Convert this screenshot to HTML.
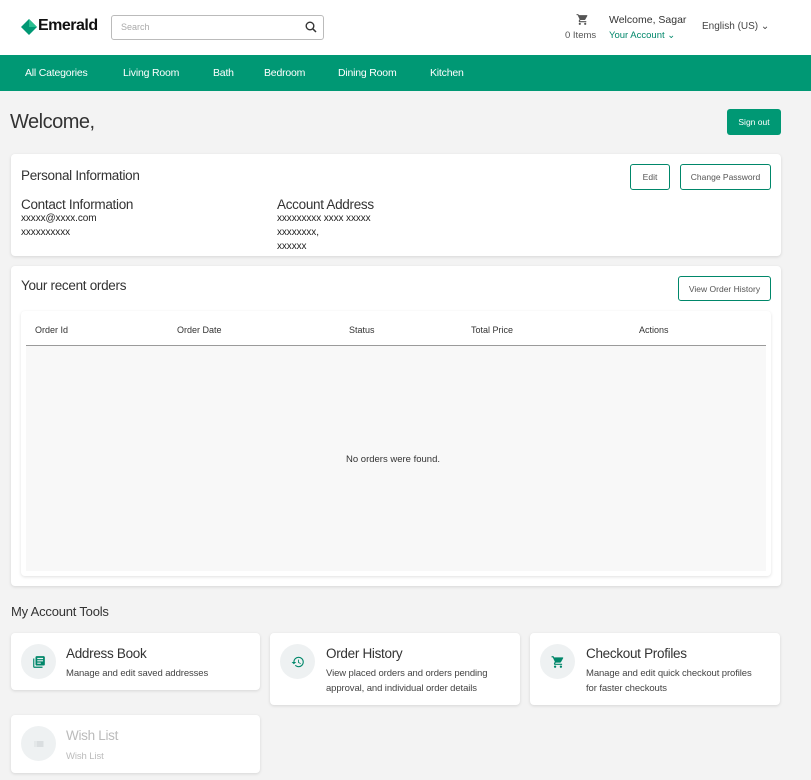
<!DOCTYPE html>
<html><head><meta charset="utf-8"><style>
*{box-sizing:border-box;margin:0;padding:0}
body{width:811px;height:780px;background:#f3f3f3;font-family:"Liberation Sans",sans-serif;color:#333;position:relative;overflow:hidden}
.a{position:absolute;white-space:nowrap}
.card{position:absolute;background:#fff;border-radius:4px;box-shadow:0 1px 3px rgba(0,0,0,.12)}
.btn{position:absolute;border:1px solid #00876a;border-radius:3px;color:#555;font-size:8.5px;display:flex;align-items:center;justify-content:center;background:#fff}
.nav span{position:absolute;top:67px;color:#fff;font-size:10.5px;letter-spacing:-.2px}
.th{position:absolute;top:325px;font-size:9px;color:#333}
.ic{position:absolute;width:35px;height:35px;border-radius:50%;background:#eef1f2;display:flex;align-items:center;justify-content:center}
.t{position:absolute;font-size:13.5px;color:#333;letter-spacing:-.3px}
.d{position:absolute;font-size:9.5px;color:#444;line-height:15px;letter-spacing:-.1px}
</style></head><body>
<div class="a" style="left:0;top:0;width:811px;height:55px;background:#fff"></div>
<svg class="a" style="left:21px;top:19px" width="16" height="16" viewBox="0 0 16 16"><polygon points="8,0 16,8 8,16 0,8" fill="#009874"/><polygon points="8,0 16,8 8,8" fill="#2bbf91"/></svg>
<div class="a" style="left:38px;top:17px;font-size:16px;font-weight:bold;color:#111;letter-spacing:-.5px">Emerald</div>
<div class="a" style="left:111px;top:15px;width:213px;height:25px;border:1px solid #bbb;border-radius:3px;background:#fff"></div>
<div class="a" style="left:121px;top:22px;font-size:9px;color:#aaa">Search</div>
<svg class="a" style="left:305px;top:21px" width="12" height="12" viewBox="0 0 12 12"><circle cx="5" cy="5" r="3.8" fill="none" stroke="#333" stroke-width="1.4"/><line x1="7.8" y1="7.8" x2="11" y2="11" stroke="#333" stroke-width="1.5"/></svg>
<svg class="a" style="left:576px;top:13px" width="13" height="13" viewBox="0 0 24 24"><path fill="#555" d="M7 18c-1.1 0-2 .9-2 2s.9 2 2 2 2-.9 2-2-.9-2-2-2zM1 2v2h2l3.6 7.6-1.4 2.4c-.1.3-.2.6-.2 1 0 1.1.9 2 2 2h12v-2H7.4c-.1 0-.2-.1-.2-.2v-.1l.9-1.7h7.4c.8 0 1.4-.4 1.7-1l3.6-6.5c.1-.2.2-.3.2-.5 0-.6-.4-1-1-1H5.2l-.9-2H1zm16 16c-1.1 0-2 .9-2 2s.9 2 2 2 2-.9 2-2-.9-2-2-2z"/></svg>
<div class="a" style="left:565px;top:30px;font-size:9.5px;color:#555">0 Items</div>
<div class="a" style="left:609px;top:14px;font-size:10.5px;color:#333">Welcome, Sagar</div>
<div class="a" style="left:609px;top:30px;font-size:9.5px;color:#00876a">Your Account ⌄</div>
<div class="a" style="left:702px;top:21px;font-size:10px;color:#444">English (US) ⌄</div>
<div class="a nav" style="left:0;top:55px;width:811px;height:36px;background:#009874"></div>
<div class="nav"><span style="left:25px">All Categories</span><span style="left:123px">Living Room</span><span style="left:213px">Bath</span><span style="left:264px">Bedroom</span><span style="left:338px">Dining Room</span><span style="left:430px">Kitchen</span></div>
<div class="a" style="left:10px;top:111px;font-size:20px;color:#333;letter-spacing:-.5px">Welcome,</div>
<div class="a" style="left:727px;top:109px;width:54px;height:26px;background:#009874;border-radius:3px;color:#fff;font-size:8.5px;display:flex;align-items:center;justify-content:center">Sign out</div>
<div class="card" style="left:11px;top:154px;width:770px;height:102px"></div>
<div class="t" style="left:21px;top:168px">Personal Information</div>
<div class="btn" style="left:630px;top:164px;width:40px;height:26px">Edit</div>
<div class="btn" style="left:680px;top:164px;width:91px;height:26px">Change Password</div>
<div class="t" style="left:21px;top:197px">Contact Information</div>
<div class="d" style="left:21px;top:212px;font-size:10px;line-height:14px;color:#222">xxxxx@xxxx.com<br>xxxxxxxxxx</div>
<div class="t" style="left:277px;top:197px">Account Address</div>
<div class="d" style="left:277px;top:212px;font-size:10px;line-height:14px;color:#222">xxxxxxxxx xxxx xxxxx<br>xxxxxxxx,<br>xxxxxx</div>
<div class="card" style="left:11px;top:266px;width:770px;height:320px"></div>
<div class="t" style="left:21px;top:278px">Your recent orders</div>
<div class="btn" style="left:678px;top:276px;width:93px;height:25px">View Order History</div>
<div class="card" style="left:21px;top:311px;width:750px;height:265px"></div>
<div class="th" style="left:35px">Order Id</div><div class="th" style="left:177px">Order Date</div><div class="th" style="left:349px">Status</div><div class="th" style="left:471px">Total Price</div><div class="th" style="left:639px">Actions</div>
<div class="a" style="left:26px;top:345px;width:740px;height:1px;background:#9a9a9a"></div>
<div class="a" style="left:26px;top:346px;width:740px;height:225px;background:#f8f8f8"></div>
<div class="a" style="left:346px;top:454px;font-size:9.5px;color:#333">No orders were found.</div>
<div class="a" style="left:11px;top:604px;font-size:13px;color:#333;letter-spacing:-.2px">My Account Tools</div>
<div class="card" style="left:11px;top:633px;width:249px;height:57px"></div>
<div class="card" style="left:270px;top:633px;width:250px;height:72px"></div>
<div class="card" style="left:530px;top:633px;width:250px;height:72px"></div>
<div class="card" style="left:11px;top:715px;width:249px;height:58px"></div>
<div class="ic" style="left:21px;top:644px"><svg width="14" height="14" viewBox="0 0 24 24"><path fill="#00876a" d="M4 6H2v14c0 1.1.9 2 2 2h14v-2H4V6zm16-4H8c-1.1 0-2 .9-2 2v12c0 1.1.9 2 2 2h12c1.1 0 2-.9 2-2V4c0-1.1-.9-2-2-2zm-1 9H9V9h10v2zm-4 4H9v-2h6v2zm4-8H9V5h10v2z"/></svg></div>
<div class="ic" style="left:280px;top:644px"><svg width="14" height="14" viewBox="0 0 24 24"><path fill="#00876a" d="M13 3a9 9 0 0 0-9 9H1l3.9 3.9L9 12H6c0-3.9 3.1-7 7-7s7 3.1 7 7-3.1 7-7 7c-1.9 0-3.7-.8-4.9-2.1l-1.4 1.4C8.3 20 10.5 21 13 21a9 9 0 0 0 0-18zm-1 5v5l4.3 2.5.7-1.2-3.5-2.1V8H12z"/></svg></div>
<div class="ic" style="left:540px;top:644px"><svg width="14" height="14" viewBox="0 0 24 24"><path fill="#00876a" d="M7 18c-1.1 0-2 .9-2 2s.9 2 2 2 2-.9 2-2-.9-2-2-2zM1 2v2h2l3.6 7.6-1.4 2.4c-.1.3-.2.6-.2 1 0 1.1.9 2 2 2h12v-2H7.4c-.1 0-.2-.1-.2-.2v-.1l.9-1.7h7.4c.8 0 1.4-.4 1.7-1l3.6-6.5c.1-.2.2-.3.2-.5 0-.6-.4-1-1-1H5.2l-.9-2H1zm16 16c-1.1 0-2 .9-2 2s.9 2 2 2 2-.9 2-2-.9-2-2-2z"/></svg></div>
<div class="ic" style="left:21px;top:726px"><svg width="12" height="12" viewBox="0 0 24 24"><path fill="#c5cbcf" d="M3 13h2v-2H3v2zm0 4h2v-2H3v2zm0-8h2V7H3v2zm4 4h14v-2H7v2zm0 4h14v-2H7v2zM7 7v2h14V7H7z"/></svg></div>
<div class="t" style="left:66px;top:646px">Address Book</div>
<div class="d" style="left:66px;top:666px">Manage and edit saved addresses</div>
<div class="t" style="left:326px;top:646px">Order History</div>
<div class="d" style="left:326px;top:666px">View placed orders and orders pending<br>approval, and individual order details</div>
<div class="t" style="left:586px;top:646px">Checkout Profiles</div>
<div class="d" style="left:586px;top:666px">Manage and edit quick checkout profiles<br>for faster checkouts</div>
<div class="t" style="left:66px;top:728px;color:#bbb">Wish List</div>
<div class="d" style="left:66px;top:749px;color:#bbb">Wish List</div>
</body></html>
